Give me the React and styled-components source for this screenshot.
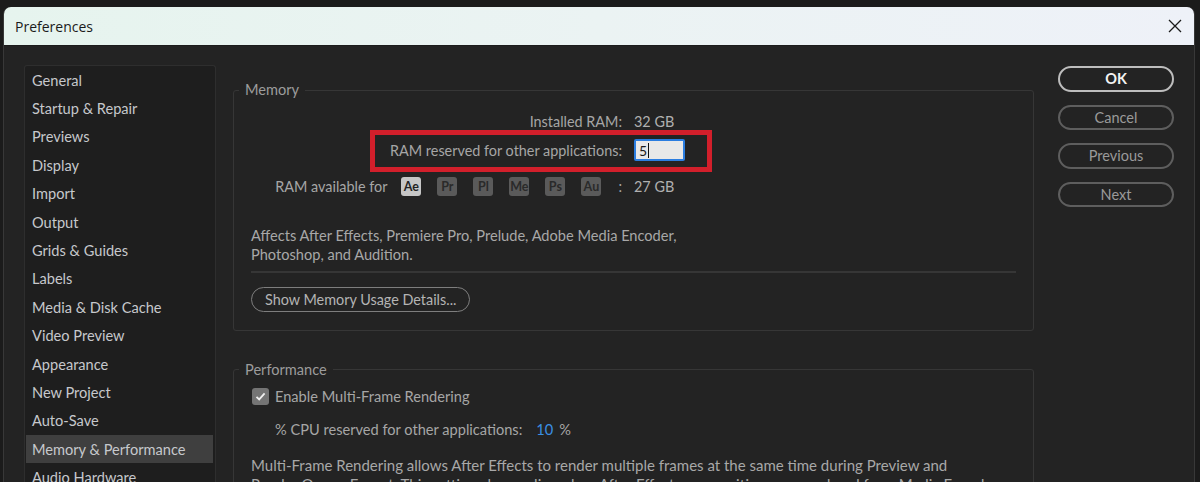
import React from "react";
import styled, { createGlobalStyle } from "styled-components";

const GlobalStyle = createGlobalStyle`
  html, body {
    margin: 0;
    padding: 0;
    background: #1b1b1b;
  }
  * {
    box-sizing: border-box;
  }
`;

const Screen = styled.div`
  width: 1200px;
  height: 482px;
  overflow: hidden;
  padding: 7px 0 0 3px;
  background: #1b1b1b;
  font-family: Lato, "Liberation Sans", sans-serif;
`;

const Window = styled.div`
  width: 1192px;
  height: 100%;
  background: #232323;
  border-left: 1px solid #383838;
  border-right: 1px solid #383838;
  border-radius: 8px 8px 0 0;
  display: flex;
  flex-direction: column;
`;

const TitleBar = styled.div`
  height: 39px;
  flex-shrink: 0;
  display: flex;
  align-items: center;
  justify-content: space-between;
  padding: 0 12px 0 11px;
  background: linear-gradient(90deg, #e6f4ee 0%, #ebf3f3 50%, #eef1f8 100%);
  border-radius: 7px 7px 0 0;
  border-bottom: 1px solid #1c1c1c;
`;

const Title = styled.span`
  font-family: "Open Sans", "Noto Sans", sans-serif;
  font-size: 14px;
  color: #1b1b1b;
`;

const CloseIcon = () => (
  <svg width="14" height="14" viewBox="0 0 14 14">
    <path d="M1 1 L13 13 M13 1 L1 13" stroke="#1a1a1a" strokeWidth="1.3" fill="none" />
  </svg>
);

const Body = styled.div`
  flex: 1;
  display: flex;
  padding: 19px 20px 0 20px;
  min-height: 0;
`;

const Sidebar = styled.div`
  width: 192px;
  flex-shrink: 0;
  background: #1e1e1e;
  border: 1px solid #2e2e2e;
  border-bottom: none;
  border-radius: 3px 3px 0 0;
  padding: 0 2px 0 1px;
  overflow: hidden;
`;

const NavItem = styled.div`
  height: 28.4px;
  display: flex;
  align-items: center;
  padding-left: 6px;
  font-size: 14.6px;
  color: #c6c8cc;
  white-space: nowrap;
  background: ${(p) => (p.$active ? "#3f3f3f" : "transparent")};
`;

const Content = styled.div`
  width: 801px;
  margin-left: 17px;
  flex-shrink: 0;
`;

const Group = styled.fieldset`
  margin: ${(p) => p.$top}px 0 0 0;
  padding: ${(p) => p.$pad};
  border: 1px solid #363636;
  border-radius: 3px;
  min-width: 0;
`;

const Legend = styled.legend`
  margin-left: -12px;
  padding: 0 6px;
  font-size: 14.6px;
  line-height: 18px;
  color: #9c9c9c;
`;

const Row = styled.div`
  position: relative;
  display: grid;
  grid-template-columns: 371px auto;
  column-gap: 12px;
  align-items: center;
  height: 22px;
  margin-top: ${(p) => p.$top || 0}px;
  font-size: 14.4px;
  color: #a6a6a6;
`;

const Label = styled.div`
  display: flex;
  align-items: center;
  justify-content: flex-end;
  white-space: nowrap;
`;

const Value = styled.span`
  color: #b0b0b0;
  white-space: nowrap;
`;

const Badges = styled.div`
  display: flex;
  gap: 16px;
  margin-left: 14px;
`;

const Badge = styled.span`
  width: 20px;
  height: 19px;
  border-radius: 3px;
  display: flex;
  align-items: center;
  justify-content: center;
  font-size: 12.5px;
  font-weight: 700;
  background: ${(p) => (p.$on ? "#c6c6c6" : "#5a5a5a")};
  color: ${(p) => (p.$on ? "#222" : "#2a2a2a")};
`;

const Colon = styled.span`
  margin-left: 17px;
`;

const Field = styled.div`
  width: 51px;
  height: 22px;
  border: 2px solid #2b7de0;
  border-radius: 2px;
  background: #e8e8e8;
  display: flex;
  align-items: center;
  padding-left: 3px;
  font-size: 14px;
  color: #1a1a1a;
`;

const Caret = styled.span`
  width: 1px;
  height: 15px;
  background: #111;
  margin-left: 1px;
`;

const Annotation = styled.div`
  position: absolute;
  left: 119px;
  top: -9px;
  width: 342px;
  height: 42px;
  border: 5px solid #d21f2b;
  pointer-events: none;
`;

const Desc = styled.p`
  margin: ${(p) => p.$top}px 0 0 0;
  font-size: ${(p) => p.$size || 15}px;
  line-height: 19px;
  color: #a8a8a8;
  white-space: nowrap;
`;

const Divider = styled.div`
  height: 2px;
  margin-top: 7px;
  background: #363636;
`;

const PillButton = styled.button`
  display: block;
  margin-top: 14px;
  height: 25px;
  padding: 0 13px;
  border: 1.5px solid #7e7e7e;
  border-radius: 13px;
  background: transparent;
  font-family: inherit;
  font-size: 14.4px;
  color: #b4b4b4;
`;

const CheckRow = styled.label`
  display: flex;
  align-items: center;
  gap: 6px;
  height: 20px;
  padding-left: 1px;
  font-size: 14.6px;
  color: #a6a6a6;
`;

const CheckBox = styled.span`
  width: 17px;
  height: 17px;
  border-radius: 3px;
  background: #747474;
  display: flex;
  align-items: center;
  justify-content: center;
`;

const CpuRow = styled.div`
  display: flex;
  align-items: center;
  height: 20px;
  margin-top: 13px;
  padding-left: 24px;
  font-size: 14.6px;
  color: #a6a6a6;
  white-space: nowrap;
`;

const Blue = styled.span`
  color: #3a8fe2;
  margin: 0 6px 0 14px;
`;

const Actions = styled.div`
  width: 116px;
  margin-left: 24px;
  margin-top: 1px;
  display: flex;
  flex-direction: column;
  gap: 13px;
  flex-shrink: 0;
`;

const ActionButton = styled.button`
  height: 25.5px;
  border-radius: 13px;
  background: transparent;
  border: 2px solid ${(p) => (p.$primary ? "#bdbdbd" : "#5e5e5e")};
  color: ${(p) => (p.$primary ? "#f2f2f2" : "#9a9a9a")};
  font-family: Lato, sans-serif;
  font-size: 14.5px;
  font-weight: ${(p) => (p.$primary ? 700 : 400)};
`;

const nav = [
  "General",
  "Startup & Repair",
  "Previews",
  "Display",
  "Import",
  "Output",
  "Grids & Guides",
  "Labels",
  "Media & Disk Cache",
  "Video Preview",
  "Appearance",
  "New Project",
  "Auto-Save",
  "Memory & Performance",
  "Audio Hardware",
];

const apps = ["Ae", "Pr", "Pl", "Me", "Ps", "Au"];

export default function App() {
  return (
    <Screen>
      <GlobalStyle />
      <Window>
        <TitleBar>
          <Title>Preferences</Title>
          <CloseIcon />
        </TitleBar>
        <Body>
          <Sidebar>
            {nav.map((item) => (
              <NavItem key={item} $active={item === "Memory & Performance"}>
                {item}
              </NavItem>
            ))}
          </Sidebar>

          <Content>
            <Group $top={16} $pad="11px 17px 18px 17px">
              <Legend>Memory</Legend>
              <Row>
                <Label>Installed RAM:</Label>
                <Value>32 GB</Value>
              </Row>
              <Row $top={7}>
                <Label>RAM reserved for other applications:</Label>
                <Field>
                  5<Caret />
                </Field>
                <Annotation />
              </Row>
              <Row $top={14}>
                <Label>
                  RAM available for
                  <Badges>
                    {apps.map((a, i) => (
                      <Badge key={a} $on={i === 0}>
                        {a}
                      </Badge>
                    ))}
                  </Badges>
                  <Colon>:</Colon>
                </Label>
                <Value>27 GB</Value>
              </Row>
              <Desc $top={28.5} $size={14.6}>
                Affects After Effects, Premiere Pro, Prelude, Adobe Media Encoder,
                <br />
                Photoshop, and Audition.
              </Desc>
              <Divider />
              <PillButton>Show Memory Usage Details...</PillButton>
            </Group>

            <Group $top={30} $pad="8px 17px 18px 17px">
              <Legend>Performance</Legend>
              <CheckRow>
                <CheckBox>
                  <svg width="13" height="13" viewBox="0 0 13 13">
                    <path d="M2.5 6.8 L5.2 9.4 L10.6 3.4" stroke="#f0f0f0" strokeWidth="1.8" fill="none" />
                  </svg>
                </CheckBox>
                Enable Multi-Frame Rendering
              </CheckRow>
              <CpuRow>
                % CPU reserved for other applications:
                <Blue>10</Blue>%
              </CpuRow>
              <Desc $top={16.5}>
                Multi-Frame Rendering allows After Effects to render multiple frames at the same time during Preview and
                <br />
                Render Queue Export. This setting also applies when After Effects compositions are rendered from Media Encoder.
              </Desc>
            </Group>
          </Content>

          <Actions>
            <ActionButton $primary>OK</ActionButton>
            <ActionButton>Cancel</ActionButton>
            <ActionButton>Previous</ActionButton>
            <ActionButton>Next</ActionButton>
          </Actions>
        </Body>
      </Window>
    </Screen>
  );
}
